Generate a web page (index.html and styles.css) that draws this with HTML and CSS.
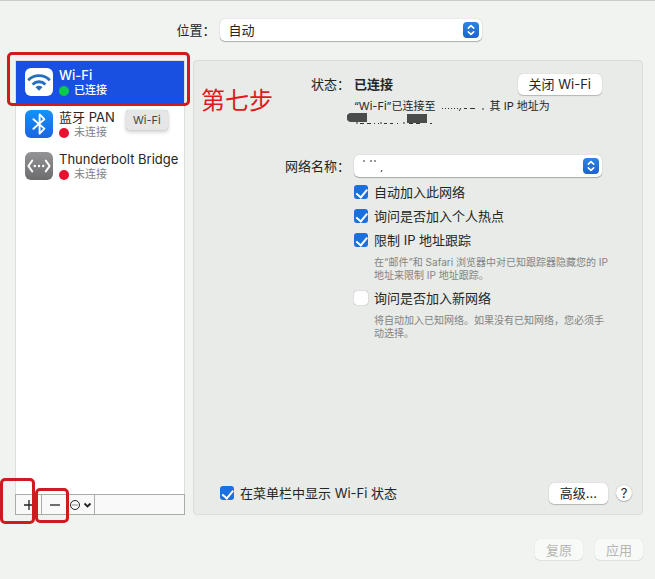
FILE: index.html
```
<!DOCTYPE html>
<html lang="zh-CN">
  <head>
    <meta charset="utf-8" />
    <meta name="viewport" content="width=device-width, initial-scale=1.0" />
    <title>网络</title>
    <link rel="stylesheet" href="styles.css">
  </head>
  <body>
    <header class="location">
      <label for="location">位置：</label>
      <div class="popup">
        <select id="location"><option>自动</option></select>
        <svg class="stepper" viewBox="0 0 16 16"><path d="M5.3 6.2 8 3.6l2.7 2.6M5.3 9.8 8 12.4l2.7-2.6" /></svg>
      </div>
    </header>

    <div class="columns">
      <aside class="sidebar">
        <ul class="services">
          <li class="service selected">
            <svg class="icon" viewBox="0 0 28 28">
              <rect width="28" height="28" rx="6" fill="#fff" />
              <g fill="none" stroke="#2470c0" stroke-width="2.8">
                <path d="M3.2 12.2a15 15 0 0 1 21.6 0" />
                <path d="M7.6 16.4a9 9 0 0 1 12.8 0" />
              </g>
              <path d="M14 22.8l-3.5-3.6a5 5 0 0 1 7 0z" fill="#2470c0" />
            </svg>
            <div>
              <div class="name">Wi-Fi</div>
              <div class="state on">已连接</div>
            </div>
          </li>
          <li class="service">
            <svg class="icon" viewBox="0 0 28 28">
              <defs>
                <linearGradient id="blue" x2="0" y2="1"><stop stop-color="#1292fa" /><stop offset="1" stop-color="#1b66df" /></linearGradient>
              </defs>
              <rect width="28" height="28" rx="6" fill="url(#blue)" />
              <path d="M8.4 9.2 19.4 18.6 14.6 23.6V4.4L19.4 9.2 8.4 18.8" fill="none" stroke="#fff" stroke-width="1.9" stroke-linejoin="round" stroke-linecap="round" />
            </svg>
            <div>
              <div class="name">蓝牙 PAN</div>
              <div class="state">未连接</div>
            </div>
            <div class="tooltip">Wi-Fi</div>
          </li>
          <li class="service">
            <svg class="icon" viewBox="0 0 28 28">
              <defs>
                <linearGradient id="grey" x2="0" y2="1"><stop stop-color="#949496" /><stop offset="1" stop-color="#6c6c6e" /></linearGradient>
              </defs>
              <rect width="28" height="28" rx="6" fill="url(#grey)" />
              <path d="M7.2 8.6 3.4 14l3.8 5.4M20.8 8.6l3.8 5.4-3.8 5.4" fill="none" stroke="#fff" stroke-width="2" stroke-linejoin="round" stroke-linecap="round" />
              <g fill="#fff"><circle cx="9.8" cy="14" r="1.2" /><circle cx="14" cy="14" r="1.2" /><circle cx="18.2" cy="14" r="1.2" /></g>
            </svg>
            <div>
              <div class="name">Thunderbolt Bridge</div>
              <div class="state">未连接</div>
            </div>
          </li>
        </ul>
        <div class="toolbar">
          <button class="tool" aria-label="添加">
            <svg width="12" height="12" viewBox="0 0 12 12"><path d="M6 1v10M1 6h10" /></svg>
          </button>
          <button class="tool" aria-label="移除">
            <svg width="12" height="12" viewBox="0 0 12 12"><path d="M1 6h10" /></svg>
          </button>
          <button class="tool more" aria-label="更多">
            <svg width="24" height="12" viewBox="0 0 24 12">
              <circle cx="6" cy="6" r="4.5" stroke-width="1" />
              <path d="M3.5 6h1M5.5 6h1M7.5 6h1" stroke-width="1" />
              <path d="M15.5 4.5l3 3 3-3" stroke-width="1.8" />
            </svg>
          </button>
        </div>
        <div class="mark mark-wifi"></div>
        <div class="mark mark-add"></div>
        <div class="mark mark-remove"></div>
      </aside>

      <main class="panel">
        <div class="step">第七步</div>
        <div class="form">
          <div class="label">状态：</div>
          <div class="status">
            <strong>已连接</strong>
            <button class="btn">关闭 Wi-Fi</button>
          </div>

          <p class="detail">
            “Wi-Fi”已连接至
            <svg class="scrap" width="48" height="14" viewBox="0 0 48 14">
              <path d="M3 9.5h1M6 9.5h1M9 9.5h1M12 9.5h1M15 9.5h1M18 9.5h1M22 9l-2 3M25 9.5h3M31 9.5h5M44 9v2" />
            </svg>
            其 IP 地址为
            <svg class="blot" width="90" height="14" viewBox="0 0 90 14">
              <path d="M4 0h16v9H4a4 4 0 0 1 0-9zM60 1h20v9H60z" fill="#4a4c4b" stroke="none" />
              <path d="M10 9v2M13 10.5h4M20 10.5h4M27 10.5h1M31 10.5h1M34 9v2M37 10.5h3M43 10.5h3M50 10.5h1M57 9v2M62 10.5h4M69 10.5h4M83 10.5h2" />
            </svg>
          </p>

          <label class="label" for="network">网络名称：</label>
          <div class="popup">
            <select id="network"><option></option></select>
            <svg class="scrap name-scrap" width="26" height="14" viewBox="0 0 26 14">
              <path d="M2 2h2M9 2h2M13 2h2M21 11l-1 2" />
            </svg>
            <svg class="stepper" viewBox="0 0 16 16"><path d="M5.3 6.2 8 3.6l2.7 2.6M5.3 9.8 8 12.4l2.7-2.6" /></svg>
          </div>

          <div class="options">
            <label class="check"><input type="checkbox" checked />自动加入此网络</label>
            <label class="check"><input type="checkbox" checked />询问是否加入个人热点</label>
            <label class="check"><input type="checkbox" checked />限制 IP 地址跟踪</label>
            <p class="hint">在“邮件”和 Safari 浏览器中对已知跟踪器隐藏您的 IP<br />地址来限制 IP 地址跟踪。</p>
            <label class="check"><input type="checkbox" />询问是否加入新网络</label>
            <p class="hint">将自动加入已知网络。如果没有已知网络，您必须手<br />动选择。</p>
          </div>
        </div>

        <div class="panel-footer">
          <label class="check"><input type="checkbox" checked />在菜单栏中显示 Wi-Fi 状态</label>
          <button class="btn advanced">高级...</button>
          <button class="help" aria-label="帮助">?</button>
        </div>
      </main>
    </div>

    <footer class="actions">
      <button class="btn" disabled>复原</button>
      <button class="btn" disabled>应用</button>
    </footer>
  </body>
</html>
```

FILE: styles.css
```
* {
  box-sizing: border-box;
}
body {
  margin: 0;
  min-height: 100vh;
  display: flex;
  flex-direction: column;
  padding: 18px 12px 19px 15px;
  border-top: 1px solid #c9cbc9;
  background: #f0f3f0;
  color: #242624;
  font-family: Inter, "Noto Sans CJK SC", sans-serif;
  font-size: 13px;
  line-height: 20px;
}
p,
ul {
  margin: 0;
  padding: 0;
}
button,
select {
  font: inherit;
  color: inherit;
}

/* Location row */
.location {
  display: flex;
  justify-content: center;
  align-items: center;
  gap: 4px;
}
.location .popup {
  width: 262px;
}
.popup {
  position: relative;
}
select {
  display: block;
  appearance: none;
  width: 100%;
  height: 22px;
  padding: 0 24px 0 9px;
  border: 0;
  border-radius: 5px;
  background: #fff;
  box-shadow: 0 0 1px #0004, 0 1px 1px #0004;
}
.stepper {
  position: absolute;
  top: 3px;
  right: 3px;
  width: 16px;
  height: 16px;
  border-radius: 4px;
  background: linear-gradient(#2b85e4, #1c61cf);
  fill: none;
  stroke: #fff;
  stroke-width: 1.6;
  stroke-linecap: round;
  stroke-linejoin: round;
  pointer-events: none;
}

.columns {
  flex: 1;
  display: flex;
  gap: 8px;
  margin-top: 19px;
}

/* Service list */
.sidebar {
  position: relative;
  flex: 0 0 170px;
  min-width: 0;
  display: flex;
  flex-direction: column;
  border: 1px solid #dcdfdc;
  background: #fff;
}
.services {
  flex: 1;
  list-style: none;
}
.service {
  position: relative;
  display: flex;
  gap: 6px;
  height: 42px;
  padding: 7px 0 7px 9px;
  white-space: nowrap;
}
.selected {
  background: #1950e1;
  color: #fff;
}
.icon {
  flex: none;
  width: 28px;
  height: 28px;
}
.name {
  line-height: 15px;
}
.selected .name,
.selected .state {
  font-weight: 500;
}
.state {
  display: flex;
  align-items: center;
  gap: 5px;
  font-size: 11px;
  line-height: 15px;
  color: #808280;
}
.selected .state {
  color: #fff;
}
.state::before {
  content: "";
  width: 10px;
  height: 10px;
  border-radius: 50%;
  background: #e81130;
}
.state.on::before {
  background: #0bcb4c;
}
.tooltip {
  position: absolute;
  top: 7px;
  left: 110px;
  padding: 0 7px;
  border-radius: 3px;
  background: #e5e6e5;
  box-shadow: 0 0 1px #0005, 0 2px 4px #0003;
  color: #444;
  font-size: 11px;
}
.toolbar {
  display: flex;
  height: 21px;
  margin: 0 -1px -1px;
  border: 1px solid #a9aca9;
  background: #f8f9f8;
}
.tool {
  display: flex;
  align-items: center;
  justify-content: center;
  width: 26px;
  padding: 0;
  border: 0;
  border-right: 1px solid #a9aca9;
  background: none;
}
.tool.more {
  width: 27px;
}
.tool svg {
  flex: none;
  fill: none;
  stroke: #222;
  stroke-width: 1.3;
}

/* Red annotations */
.mark {
  position: absolute;
  border: 3px solid #cf1b20;
  border-radius: 5px;
  pointer-events: none;
}
.mark-wifi {
  top: -9px;
  left: -9px;
  right: -6px;
  height: 54px;
}
.mark-add {
  left: -16px;
  bottom: -10px;
  width: 35px;
  height: 46px;
}
.mark-remove {
  left: 19px;
  bottom: -9px;
  width: 34px;
  height: 35px;
}
.step {
  position: absolute;
  top: 24px;
  left: 7px;
  color: #e0191c;
  font-size: 24px;
  line-height: 32px;
}

/* Settings panel */
.panel {
  position: relative;
  flex: 1;
  display: flex;
  flex-direction: column;
  justify-content: space-between;
  padding: 12px 10px 9px 0;
  border: 1px solid #dadddb;
  border-radius: 4px;
  background: #e8ebe8;
}
.form {
  display: grid;
  grid-template-columns: 156px 1fr;
  column-gap: 4px;
  padding-right: 30px;
}
.label {
  text-align: right;
  line-height: 22px;
}
.status {
  display: flex;
  align-items: center;
  justify-content: space-between;
}
.status strong {
  font-weight: 600;
}
.detail {
  grid-column: 2;
  position: relative;
  height: 60px;
  padding-top: 4px;
  font-size: 11px;
  line-height: 14px;
  white-space: nowrap;
}
.scrap,
.blot {
  fill: none;
  stroke: #333;
  stroke-width: 1;
}
.scrap {
  vertical-align: top;
}
.blot {
  position: absolute;
  top: 18px;
  left: -7px;
}
.name-scrap {
  position: absolute;
  top: 4px;
  left: 7px;
}
.options {
  grid-column: 2;
  display: flex;
  flex-direction: column;
  margin-top: 3px;
}
.check {
  display: flex;
  align-items: center;
  gap: 6px;
  line-height: 24px;
}
.check input {
  position: relative;
  appearance: none;
  width: 14px;
  height: 14px;
  margin: 0;
  border-radius: 3px;
  background: #fff;
  box-shadow: 0 0 1px #0008;
}
.check input:checked {
  background: #1c6fe0;
  box-shadow: none;
}
.check input:checked::after {
  content: "";
  position: absolute;
  top: 2px;
  left: 5px;
  width: 5px;
  height: 9px;
  border: solid #fff;
  border-width: 0 2px 2px 0;
  transform: rotate(40deg);
  transform-origin: 50% 40%;
}
.hint {
  margin: 4px -12px 4px 20px;
  color: #838583;
  font-size: 10px;
  line-height: 13px;
  white-space: nowrap;
}

.btn {
  height: 21px;
  padding: 0 11px;
  border: 0;
  border-radius: 5px;
  background: #fff;
  box-shadow: 0 0 1px #0004, 0 1px 1px #0003;
  line-height: 20px;
}
.btn:disabled {
  background: #f8faf8;
  box-shadow: 0 0 1px #0002, 0 1px 1px #0001;
  color: #b4b6b4;
}
.panel-footer {
  display: flex;
  align-items: center;
  gap: 8px;
  padding-left: 26px;
}
.advanced {
  margin-left: auto;
}
.help {
  width: 16px;
  height: 16px;
  padding: 0;
  border: 0;
  border-radius: 50%;
  background: #fff;
  box-shadow: 0 0 1px #0005, 0 1px 1px #0003;
  line-height: 16px;
}

.actions {
  display: flex;
  justify-content: flex-end;
  gap: 12px;
  margin-top: 24px;
}
.actions .btn {
  width: 48px;
}
```
